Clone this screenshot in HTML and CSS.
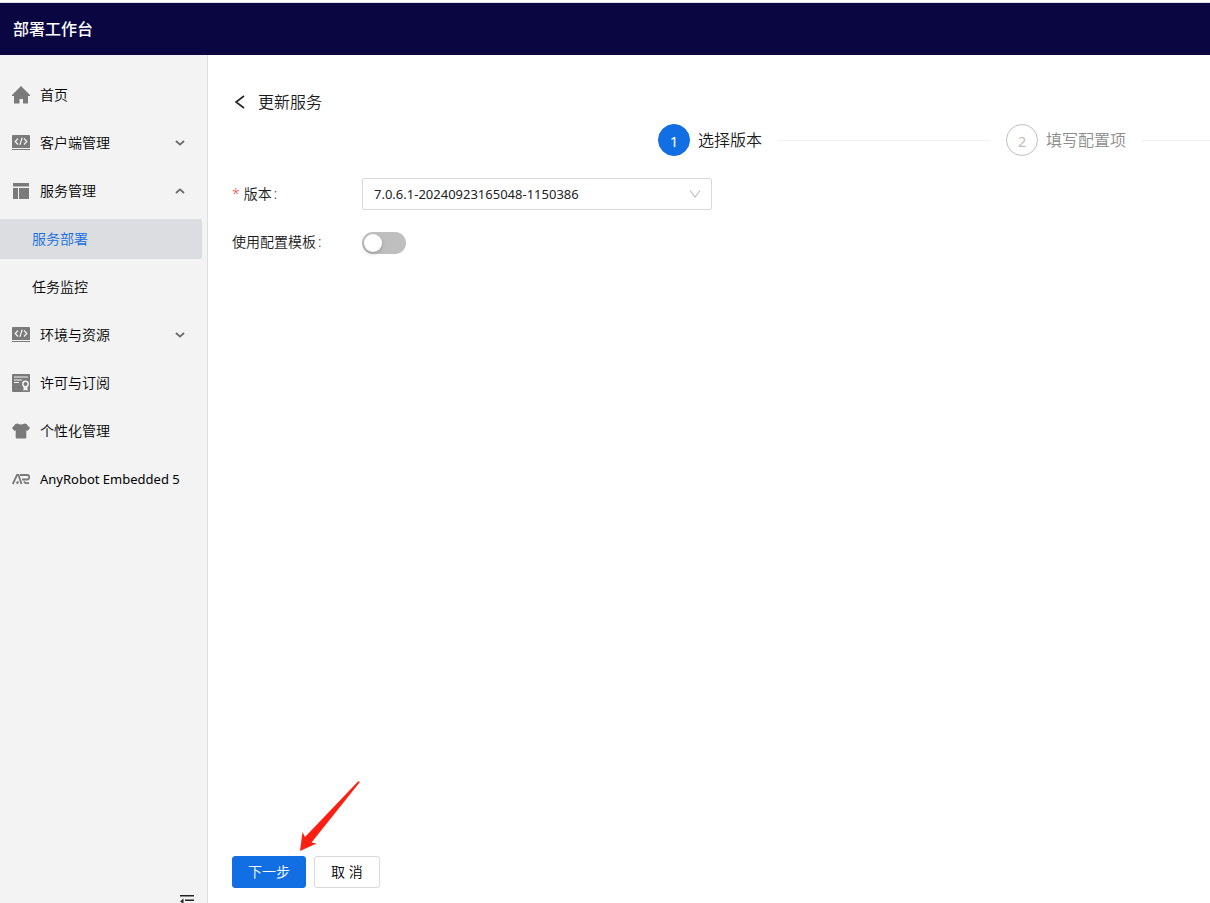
FILE: index.html
```html
<!DOCTYPE html>
<html lang="zh-CN">
<head>
<meta charset="utf-8">
<meta name="viewport" content="width=device-width, initial-scale=1">
<title>部署工作台</title>
<link rel="stylesheet" href="styles.css">
</head>
<body>
<svg class="sprite" aria-hidden="true">
  <symbol id="code" viewBox="0 0 18 16">
    <path fill="currentColor" d="M1 0h16q1 0 1 1v12H0V1q0-1 1-1zM0 14h18v1H0z"/>
    <path class="cut" d="M6 3.500 3.200 6.500 6 9.500M12 3.500l2.800 3-2.800 3M10.200 2.800 7.800 10"/>
  </symbol>
  <symbol id="chevron" viewBox="0 0 10 6">
    <path fill="none" stroke="currentColor" stroke-width="1.800" d="M1 1l4 3.600L9 1"/>
  </symbol>
</svg>
<header class="topbar"><h1 class="brand">部署工作台</h1></header>
<div class="layout">
  <aside class="sidebar">
    <nav class="menu">
      <a class="item" href="#"><svg class="icon" viewBox="0 0 18 18"><path fill="currentColor" d="M9 0 18 9v1h-2v7.500h-5V13H7.500v4.500H2V10H0V9z"/></svg>首页</a>
      <a class="item" href="#"><svg class="icon icon-code"><use href="#code"/></svg>客户端管理<svg class="chevron"><use href="#chevron"/></svg></a>
      <a class="item" href="#"><svg class="icon" viewBox="0 0 18 18"><path fill="currentColor" d="M1 1h16v3.500H1zM1 6h5v11H1zM7 6h10v11H7z"/></svg>服务管理<svg class="chevron up"><use href="#chevron"/></svg></a>
      <a class="item sub selected" href="#" aria-current="page">服务部署</a>
      <a class="item sub" href="#">任务监控</a>
      <a class="item" href="#"><svg class="icon icon-code"><use href="#code"/></svg>环境与资源<svg class="chevron"><use href="#chevron"/></svg></a>
      <a class="item" href="#"><svg class="icon" viewBox="0 0 18 18"><rect width="18" height="18" rx="1" fill="currentColor"/><path class="cut" d="M2 3h14M2 6h8M2 8.500h5"/><path class="cut-fill" d="M11.500 12h4v5l-2-1.200-2 1.200z"/><circle class="cut ring" cx="13.500" cy="10" r="2.700"/></svg>许可与订阅</a>
      <a class="item" href="#"><svg class="icon" viewBox="0 0 18 18"><path fill="currentColor" d="M5.500 1.500q3.500 2.200 7 0l2 .4L18 6l-2.500 3-1.200-.8v7.300q0 1-1 1H4.700q-1 0-1-1V8.200L2.500 9 0 6l3.500-4.100z"/></svg>个性化管理</a>
      <a class="item" href="#"><svg class="icon" viewBox="0 0 18 18"><path fill="none" stroke="currentColor" stroke-width="1.800" d="M.8 14 5 5h1.500l3 9M4.500 13.500l2-2M8 5h7.500q1.700 0 1.700 2.200T15.500 9.500H10M12 11.500l1.500 1.700H17"/></svg><span class="latin">AnyRobot Embedded 5</span></a>
    </nav>
    <button class="collapse" type="button" aria-label="收起菜单"><svg viewBox="0 0 14 14"><path fill="#222" d="M0 1h14v1.500H0zM5 5.500h9V7H5zM0 11h14v1.500H0zM0 7.500l3.500-3v5z"/></svg></button>
  </aside>
  <main class="content">
    <h2 class="title"><a class="back" href="#" aria-label="返回"><svg viewBox="0 0 14 14"><path fill="none" stroke="#222" stroke-width="1.600" d="M12 1 4 7l8 6"/></svg></a>更新服务</h2>
    <ol class="steps">
      <li class="step active"><span class="num">1</span><span class="step-title">选择版本</span></li>
      <li class="step"><span class="num">2</span><span class="step-title">填写配置项</span></li>
    </ol>
    <form class="form">
      <div class="row">
        <label class="label" for="version"><span class="required">*</span>版本<span class="colon">:</span></label>
        <span class="select-box">
          <select id="version" class="select"><option>7.0.6.1-20240923165048-1150386</option></select>
          <svg class="select-arrow" viewBox="0 0 12 10"><path fill="none" stroke="#bfbfbf" stroke-width="1.200" d="M1 1.500 6 8l5-6.500"/></svg>
        </span>
      </div>
      <div class="row">
        <label class="label" for="template">使用配置模板<span class="colon">:</span></label>
        <input id="template" class="switch" type="checkbox" role="switch">
      </div>
      <div class="actions">
        <button class="btn primary" type="button">下一步</button>
        <button class="btn" type="button">取 消</button>
        <svg class="pointer" viewBox="0 0 62 72" aria-hidden="true"><path fill="#ff1f12" d="M1 71 3.500 52 6 57 59 1.500q2-.8 1.500 1L12.500 62.500l5 1z"/></svg>
      </div>
    </form>
  </main>
</div>
</body>
</html>
```
FILE: styles.css
```css
* {
  box-sizing: border-box;
}

body {
  margin: 0;
  height: 100vh;
  overflow: hidden;
  display: flex;
  flex-direction: column;
  background: #fff;
  color: #1a1a1a;
  font: 350 14px/22px "Noto Sans", "Noto Sans CJK SC", sans-serif;
}

.sprite {
  position: absolute;
  width: 0;
  height: 0;
}

.topbar {
  flex: none;
  display: flex;
  align-items: center;
  height: 53px;
  margin-top: 2px;
  padding: 0 13px;
  border-top: 1px solid #dcdce0;
  background: #0a0642;
}

.brand {
  margin: 0;
  color: #fff;
  font-size: 16px;
  font-weight: 500;
}

.layout {
  flex: 1;
  min-height: 0;
  display: flex;
}

.sidebar {
  flex: none;
  display: flex;
  flex-direction: column;
  width: 208px;
  overflow: hidden;
  border-right: 1px solid #dedede;
  background: #f3f3f3;
}

.menu {
  flex: 1;
  display: flex;
  flex-direction: column;
  gap: 8px;
  padding: 20px 5px 0 0;
}

.item {
  display: flex;
  align-items: center;
  gap: 10px;
  height: 40px;
  padding: 0 17px 0 12px;
  border-radius: 0 2px 2px 0;
  color: #000;
  text-decoration: none;
  white-space: nowrap;
}

.sub {
  padding-left: 32px;
}

.selected {
  background: #dcdde1;
  color: #126ee3;
}

.latin {
  font-size: 13px;
  font-weight: 400;
}

.icon {
  flex: none;
  width: 18px;
  height: 18px;
  color: #7a7a7a;
}

.icon-code {
  height: 16px;
}

.cut {
  fill: none;
  stroke: #f3f3f3;
  stroke-width: 1.2;
}

.cut-fill {
  fill: #f3f3f3;
}

.ring {
  fill: #7a7a7a;
  stroke-width: 1.5;
}

.chevron {
  width: 10px;
  height: 6px;
  margin-left: auto;
  color: #6a6a6a;
}

.up {
  transform: rotate(180deg);
}

.collapse {
  flex: none;
  align-self: flex-end;
  width: 14px;
  height: 9px;
  margin-right: 13px;
  padding: 0;
  border: 0;
  background: none;
}

.collapse svg {
  display: block;
  width: 14px;
  height: 14px;
}

.content {
  flex: 1;
  min-width: 0;
  display: flex;
  flex-direction: column;
  padding: 35px 0 15px 24px;
}

.title {
  display: flex;
  align-items: center;
  gap: 12px;
  margin: 0;
  font-size: 16px;
  font-weight: inherit;
  line-height: 24px;
}

.back svg {
  display: block;
  width: 14px;
  height: 14px;
}

.steps {
  display: flex;
  gap: 16px;
  margin: 10px 0 22px 426px;
  padding: 0;
  list-style: none;
  font-size: 16px;
  line-height: 32px;
}

.step {
  flex: 1;
  display: flex;
  align-items: center;
  color: #8c8c8c;
  white-space: nowrap;
}

.step::after {
  content: "";
  flex: 1;
  height: 1px;
  margin-left: 16px;
  background: #f0f0f0;
}

.active {
  flex: 0 0 332px;
  color: #1a1a1a;
}

.num {
  width: 32px;
  height: 32px;
  margin-right: 8px;
  border: 1px solid #bfbfbf;
  border-radius: 50%;
  color: #bfbfbf;
  font-size: 15px;
  font-weight: 400;
  text-align: center;
}

.active .num {
  border-color: #126ee3;
  background: #126ee3;
  color: #fff;
}

.form {
  flex: 1;
  display: flex;
  flex-direction: column;
  gap: 16px;
}

.row {
  display: flex;
  align-items: center;
  min-height: 32px;
}

.label {
  width: 130px;
}

.required {
  margin-right: 4px;
  color: #f5413f;
}

.colon {
  margin-left: 2px;
}

.select-box {
  position: relative;
  width: 350px;
}

.select {
  display: block;
  width: 100%;
  height: 32px;
  padding: 0 11px;
  appearance: none;
  border: 1px solid #d9d9d9;
  border-radius: 2px;
  background: #fff;
  color: #222;
  font: inherit;
  font-size: 13px;
  font-weight: 400;
}

.select-arrow {
  position: absolute;
  top: 11px;
  right: 11px;
  width: 12px;
  height: 10px;
  pointer-events: none;
}

.switch {
  appearance: none;
  width: 44px;
  height: 22px;
  margin: 1px 0 0;
  padding: 2px;
  border-radius: 11px;
  background: #bfbfbf;
}

.switch::before {
  content: "";
  display: block;
  width: 18px;
  height: 18px;
  border-radius: 50%;
  background: #fff;
  box-shadow: 0 2px 4px rgba(0, 35, 11, 0.2);
}

.switch:checked {
  background: #126ee3;
}

.switch:checked::before {
  margin-left: auto;
}

.actions {
  position: relative;
  display: flex;
  gap: 8px;
  margin-top: auto;
}

.btn {
  height: 32px;
  padding: 0 16px;
  border: 1px solid #d9d9d9;
  border-radius: 3px;
  background: #fff;
  color: #000;
  font: inherit;
}

.primary {
  padding: 0 15px;
  border-color: #126ee3;
  background: #126ee3;
  color: #fff;
}

.pointer {
  position: absolute;
  left: 67px;
  bottom: 36px;
  width: 62px;
  height: 72px;
}
```
